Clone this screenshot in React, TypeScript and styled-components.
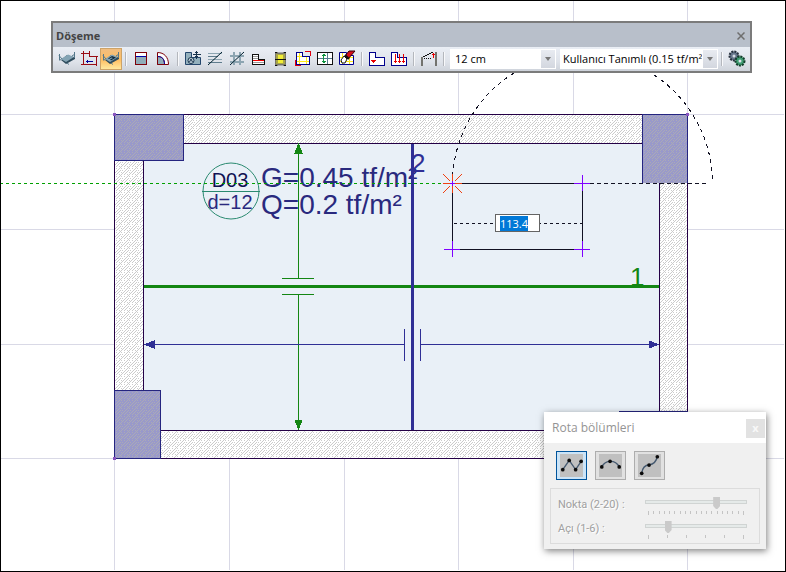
import React, { useEffect, useRef } from 'react';
import styled, { createGlobalStyle, css } from 'styled-components';

const GlobalStyle = createGlobalStyle`
  *, *::before, *::after { box-sizing: border-box; }
  body { margin: 0; background: #fff; font-family: "Open Sans", "Noto Sans", sans-serif; font-size: 12px; color: #000; }
  button, input, select { font: inherit; color: inherit; margin: 0; }
`;

const Workspace = styled.main`
  position: relative;
  min-height: 100vh;
  border: 1px solid #000;
  overflow: hidden;
  display: grid;
`;

const Plan = styled.svg`
  display: block;
  width: 100%;
  height: 100%;
  margin: -1px 0 0 -1px;
  font-family: "Liberation Sans", Arial, sans-serif;
`;

const LengthInput = styled.input`
  position: absolute;
  left: 494px;
  top: 213px;
  width: 45px;
  height: 18px;
  padding: 0 0 0 4px;
  border: 1px solid #646464;
  background: #fff;
  font-size: 11px;
  line-height: 14px;
  outline: none;
  &::selection { background: #0078d7; color: #fff; }
`;

/* ---------- toolbar ---------- */

const Toolbar = styled.section`
  position: absolute;
  left: 50px;
  top: 20px;
  border: 2px solid #7b7b7b;
  background: #b8bfca;
`;

const ToolbarHeader = styled.header`
  display: flex;
  align-items: center;
  justify-content: space-between;
  height: 24px;
  padding: 2px 5px 0 3px;
`;

const ToolbarTitle = styled.h1`
  margin: 0;
  font-size: 11px;
  line-height: 16px;
  font-weight: 700;
  color: #444;
`;

const ToolbarClose = styled.button`
  display: flex;
  padding: 0;
  border: 0;
  background: none;
  color: #6e6e6e;
`;

const ToolRow = styled.div`
  display: flex;
  align-items: center;
  height: 24px;
  padding: 0 2px 0 3px;
  background: linear-gradient(#eaeef5, #dfe3ea 60%, #ced3db);
`;

const ToolButton = styled.button<{ $active?: boolean }>`
  display: flex;
  align-items: center;
  justify-content: center;
  width: 22px;
  height: 22px;
  padding: 0;
  border: 1px solid transparent;
  background: none;
  ${(p) =>
    p.$active &&
    css`
      border-color: #cda368;
      background: linear-gradient(#f0bd80, #ffbf63 55%, #ffe9a0);
    `}
`;

const Divider = styled.span`
  width: 8px;
  height: 14px;
  border-left: 2px solid transparent;
  background: linear-gradient(90deg, transparent 1px, #b4b7bd 1px, #b4b7bd 2px, #f8f9fb 2px, #f8f9fb 3px, transparent 3px);
`;

const Combo = styled.div<{ $width: number }>`
  display: flex;
  position: relative;
  width: ${(p) => p.$width}px;
  height: 20px;
  margin-left: ${(p) => (p.$width > 120 ? 4 : 2)}px;
  background: #fff;
  overflow: hidden;
`;

const ComboSelect = styled.select<{ $inset: number }>`
  appearance: none;
  width: calc(100% - 16px);
  border: 0;
  padding: 0 0 0 ${(p) => p.$inset}px;
  background: transparent;
  font-size: 11px;
  line-height: 20px;
  text-overflow: clip;
  outline: none;
`;

const ComboArrow = styled.span`
  display: flex;
  align-items: center;
  justify-content: center;
  width: 14px;
  height: 18px;
  margin: 1px;
  background: linear-gradient(#e8ebf1, #d3d7df);
  pointer-events: none;
`;

/* ---------- route panel ---------- */

const Panel = styled.section`
  position: absolute;
  left: 543px;
  top: 411px;
  width: 222px;
  background: #f0f0f0;
  box-shadow: 1px 2px 7px rgba(0, 0, 0, 0.5);
`;

const PanelHeader = styled.header`
  display: flex;
  align-items: center;
  justify-content: space-between;
  height: 31px;
  padding: 2px 1px 0 8px;
  background: #fff;
`;

const PanelTitle = styled.h2`
  margin: 0;
  padding-bottom: 2px;
  font-size: 12px;
  line-height: 16px;
  font-weight: 400;
  color: #949494;
`;

const PanelClose = styled.button`
  width: 19px;
  height: 19px;
  padding: 0 0 2px;
  border: 0;
  background: #e2e2e2;
  color: #f8f8f8;
  font-size: 11px;
  line-height: 16px;
  font-weight: 700;
`;

const PanelBody = styled.div`
  padding: 8px 6px 5px;
`;

const RouteTypes = styled.div`
  display: flex;
  gap: 8px;
  padding-left: 6px;
`;

const RouteButton = styled.button<{ $selected?: boolean }>`
  width: 31px;
  height: 29px;
  padding: 2px 3px;
  border: 1px solid ${(p) => (p.$selected ? '#00549c' : '#adadad')};
  background: ${(p) => (p.$selected ? '#cce4f7' : '#e1e1e1')};
  display: flex;
  align-items: center;
  justify-content: center;
`;

const Settings = styled.div`
  display: grid;
  gap: 2px;
  margin-top: 8px;
  padding: 6px 12px 2px 7px;
  border: 1px solid #dcdcdc;
`;

const Setting = styled.div`
  display: flex;
  justify-content: space-between;
  height: 22px;
`;

const SettingLabel = styled.label`
  font-family: Roboto, sans-serif;
  font-size: 11px;
  line-height: 20px;
  color: #a0a0a0;
  text-shadow: 1px 1px 0 #fff;
`;

const SliderBox = styled.div`
  width: 102px;
`;

const Slider = styled.input`
  appearance: none;
  display: block;
  width: 100%;
  height: 14px;
  background: transparent;
  &::-webkit-slider-runnable-track {
    height: 4px;
    border: 1px solid #d0d4d3;
    background: #e5eae9;
  }
  &::-webkit-slider-thumb {
    appearance: none;
    width: 7px;
    height: 12px;
    margin-top: -4px;
    background: #cacaca;
    clip-path: polygon(0 0, 100% 0, 100% 75%, 60% 100%, 40% 100%, 0 75%);
  }
`;

const Ticks = styled.svg`
  display: block;
  width: 102px;
  height: 6px;
`;

/* ---------- icons ---------- */

const L_SHAPE = 'M1.5 2.5H7.5V7.5H16.5V15.5H1.5Z';

const Icon = ({ children, smooth }: { children: React.ReactNode; smooth?: boolean }) => (
  <svg width="18" height="18" viewBox="0 0 18 18" fill="none" shapeRendering={smooth ? 'auto' : 'crispEdges'} aria-hidden="true">
    {children}
  </svg>
);

const SlabIcon = ({ hole }: { hole?: boolean }) => (
  <Icon smooth>
    <path d="M3 10L8 14L17 9V7.5L9 5Z" fill="#2e4b5c" />
    <path d="M3 9L10 4.5L16 7L8 12Z" fill="#84a4b4" />
    {hole && <path d="M6 8.5L10 6L14 7.5L9 10.5L8 9.5L11 8L9.500 7.500L7 9Z" fill="#102c3e" />}
    <path d="M1.500 4V10.500M16.500 2V8M1 5.500L4 9M17 4L14 6M3 10L1 9M9 13L11 14.500" stroke="#54788b" />
  </Icon>
);

const OutlineIcon = () => (
  <Icon>
    <path d="M1 3.5H9.5V6.5H16.5V15.5M3.5 1V14.5H17M1 14.5H4M14 6.5H18M9.5 1V5" stroke="#990c14" />
    <path d="M6 11.5H13M7.5 10V13" stroke="#00009a" />
  </Icon>
);

const SquareSlabIcon = () => (
  <Icon>
    <rect x="3.5" y="2.5" width="11" height="12" fill="#8facb8" stroke="#7c0008" />
    <path d="M4 3H14V6H4Z" fill="#fff" />
    <path d="M4 6.5H14" stroke="#0000a8" />
  </Icon>
);

const ArcSlabIcon = () => (
  <Icon smooth>
    <path d="M3.5 2.5C10 2.5 14.5 7 14.5 14.5H3.5Z" fill="#fff" stroke="#7c0008" />
    <path d="M3.5 6.5C8 6.5 10.5 9 10.5 14.5H3.5Z" fill="#8facb8" stroke="#7c0008" />
    <path d="M4 6.5C8 6.5 10.5 9 10.5 14" stroke="#0000a8" />
  </Icon>
);

const AutoSlabIcon = () => (
  <Icon smooth>
    <path d="M1.5 2.5H7.5V7.5H16.5V14.5H1.5Z" fill="#93b0bd" stroke="#24466c" />
    <circle cx="7" cy="10.5" r="3" fill="#c2d3dc" stroke="#18324c" />
    <path d="M5.5 12L7 9L8.5 12" stroke="#18324c" />
    <path d="M12.5 1V9M9 4.5H17M11 2.5H14M11 6.500H14" stroke="#18324c" />
  </Icon>
);

const LinesIcon = () => (
  <Icon>
    <path d="M2 3.5H16M2 9.5H16" stroke="#8da5b2" />
    <path d="M2 6.5H12M2 12.5H16" stroke="#5f7c8d" />
    <path d="M2 15L16 2" stroke="#00202f" shapeRendering="auto" />
  </Icon>
);

const HashIcon = () => (
  <Icon>
    <path d="M6 2V15M12 2V15M2 6H16M2 12H16" stroke="#8da5b2" strokeWidth="2" />
    <path d="M2 15L16 2" stroke="#00202f" shapeRendering="auto" />
  </Icon>
);

const SectionIcon = () => (
  <Icon>
    <path d="M2.5 4.5H8.5V9.5H14.5V14.5H2.5Z" fill="#fff" stroke="#111" />
    <path d="M3 6.5H8M3 8.5H8M3 12.5H14" stroke="#999" />
    <path d="M3 10.5H14" stroke="#f00000" />
  </Icon>
);

const StripIcon = () => (
  <Icon>
    <rect x="3" y="2" width="11" height="14" fill="#77776a" />
    <rect x="4" y="4" width="9" height="10" fill="#a9a548" />
    <rect x="6" y="5" width="5" height="8" fill="#f1ee36" />
    <path d="M3 9.5H14M3 2.5H5M12 2.5H14M3 15.5H5M12 15.5H14" stroke="#111" />
    <path d="M6 2.5H11M6 15.5H11" stroke="#aaa" />
  </Icon>
);

const RegionIcon = () => (
  <Icon>
    <path d="M2.5 2.5H8.5V6.5H15.5V14.5H2.5Z" fill="#fff" stroke="#00008c" />
    <path d="M5.5 3V14M12.5 7V14M3 6.5H8M3 11.5H15" stroke="#ffeb1c" />
    <path d="M11 1.5H16.5V6M1.5 10V15.5H7" stroke="#e00010" />
  </Icon>
);

const SpanIcon = () => (
  <Icon>
    <rect x="1.5" y="2.5" width="15" height="12" fill="#fff" stroke="#111" />
    <path d="M2 8.5H16M11.5 3V14" stroke="#567b8d" />
    <path d="M7.5 4V13M5.5 5.5H9.5M6.5 4.5H8.5M5.5 11.5H9.5M6.5 12.5H8.5" stroke="#109440" />
  </Icon>
);

const EraseIcon = () => (
  <Icon smooth>
    <path d="M1.5 2.5H8.5V5.5H15.5V14.5H1.5Z" fill="#fff" stroke="#00008c" />
    <path d="M4.5 3V14M11.5 6V14M2 7.5H15M2 11.5H15" stroke="#ffeb1c" />
    <path d="M7 6L11 1H17L10 9Z" fill="#d80c18" stroke="#330006" />
    <path d="M7 5L11 9" stroke="#111" strokeWidth="2" />
    <path d="M3 10L6 6L9 9L7 13H4Z" fill="#fff" stroke="#111" />
  </Icon>
);

const LoadIcon = () => (
  <Icon>
    <path d={L_SHAPE} fill="#fff" stroke="#00008c" />
    <path d="M3 10H8V11H7V12H6V13H5V12H4V11H3Z" fill="#e80000" />
  </Icon>
);

const LoadsIcon = () => (
  <Icon>
    <path d={L_SHAPE} fill="#fff" stroke="#00008c" />
    <path d="M5.5 4V13M9.5 4V13M13.5 4V13M4 11.5H7M8 11.5H11M12 11.5H15" stroke="#e80000" />
  </Icon>
);

const SlopeIcon = () => (
  <Icon>
    <path d="M2 7V16M16 2V16" stroke="#73736e" strokeWidth="2" />
    <path d="M3 7L13 2" stroke="#111" />
    <path d="M4 8.5H12" stroke="#111" strokeDasharray="1 1" />
    <path d="M13.5 3V8M12 4.5H15" stroke="#e80000" />
  </Icon>
);

const GearsIcon = () => (
  <Icon smooth>
    <circle cx="6" cy="6" r="4.5" fill="#66758b" stroke="#27303d" strokeWidth="2" strokeDasharray="2 1" />
    <circle cx="6" cy="6" r="1.5" fill="#d5dae3" />
    <circle cx="12" cy="11" r="4.5" fill="#3f9d72" stroke="#123d2a" strokeWidth="2" strokeDasharray="2 1" />
    <circle cx="12" cy="11" r="1.5" fill="#e0e4ec" />
  </Icon>
);

type Tool = { label: string; icon: React.ReactNode; active?: boolean };

const toolGroups: Tool[][] = [
  [
    { label: 'Döşeme', icon: <SlabIcon /> },
    { label: 'Döşeme sınırı', icon: <OutlineIcon /> },
    { label: 'Döşeme boşluğu', icon: <SlabIcon hole />, active: true },
  ],
  [
    { label: 'Düz kenar', icon: <SquareSlabIcon /> },
    { label: 'Eğri kenar', icon: <ArcSlabIcon /> },
  ],
  [
    { label: 'Otomatik döşeme', icon: <AutoSlabIcon /> },
    { label: 'Tek yön', icon: <LinesIcon /> },
    { label: 'Çift yön', icon: <HashIcon /> },
    { label: 'Kesit', icon: <SectionIcon /> },
    { label: 'Şerit', icon: <StripIcon /> },
    { label: 'Bölge', icon: <RegionIcon /> },
    { label: 'Açıklık', icon: <SpanIcon /> },
    { label: 'Sil', icon: <EraseIcon /> },
  ],
  [
    { label: 'Yük', icon: <LoadIcon /> },
    { label: 'Yükler', icon: <LoadsIcon /> },
  ],
  [{ label: 'Eğim', icon: <SlopeIcon /> }],
];

const DropArrow = () => (
  <ComboArrow>
    <svg width="6" height="4" viewBox="0 0 6 4" aria-hidden="true">
      <path d="M0 0H6L3 4Z" fill="#777" />
    </svg>
  </ComboArrow>
);

const SlabToolbar = () => (
  <Toolbar aria-label="Döşeme">
    <ToolbarHeader>
      <ToolbarTitle>Döşeme</ToolbarTitle>
      <ToolbarClose aria-label="Kapat">
        <svg width="8" height="8" viewBox="0 0 8 8" aria-hidden="true">
          <path d="M0.5 0.5L7.5 7.5M7.5 0.5L0.5 7.5" stroke="currentColor" strokeWidth="1.5" />
        </svg>
      </ToolbarClose>
    </ToolbarHeader>
    <ToolRow>
      {toolGroups.map((group, i) => (
        <React.Fragment key={i}>
          {group.map((tool) => (
            <ToolButton key={tool.label} $active={tool.active} aria-label={tool.label}>
              {tool.icon}
            </ToolButton>
          ))}
          <Divider />
        </React.Fragment>
      ))}
      <Combo $width={106}>
        <ComboSelect $inset={5} aria-label="Kalınlık">
          <option>12 cm</option>
        </ComboSelect>
        <DropArrow />
      </Combo>
      <Combo $width={158}>
        <ComboSelect $inset={3} aria-label="Hareketli yük">
          <option>Kullanıcı Tanımlı (0.15 tf/m²)</option>
        </ComboSelect>
        <DropArrow />
      </Combo>
      <Divider />
      <ToolButton aria-label="Ayarlar">
        <GearsIcon />
      </ToolButton>
    </ToolRow>
  </Toolbar>
);

/* ---------- plan drawing ---------- */

const GRID_X = [114, 229, 344, 458, 573, 687];
const GRID_Y = [114, 229, 344, 458];

const HATCH_DOTS: number[][] = [
  [7, 0], [6, 1], [5, 2], [4, 3], [3, 4], [2, 5], [1, 6], [0, 7],
  [1, 0], [4, 0], [2, 2], [0, 2], [7, 3], [1, 4], [6, 4], [4, 6], [7, 6], [5, 5],
];
const HATCH = HATCH_DOTS.map(([x, y]) => `M${x} ${y}h1v1h-1z`).join('');

const NodeMark = ({ x, y }: { x: number; y: number }) => (
  <path d={`M${x - 8} ${y}.5H${x + 8}M${x}.5 ${y - 8}V${y + 8}`} stroke="#7f00ff" />
);

const FloorPlan = () => (
  <Plan shapeRendering="crispEdges" role="img" aria-label="Döşeme planı">
    <defs>
      <pattern id="wallHatch" width="8" height="8" patternUnits="userSpaceOnUse">
        <rect width="8" height="8" fill="#fff" />
        <path d={HATCH} fill="#cbcbcb" />
      </pattern>
      <pattern id="columnHatch" width="8" height="8" patternUnits="userSpaceOnUse">
        <rect width="8" height="8" fill="#9999ca" />
        <path d={HATCH} fill="#aaaab6" />
      </pattern>
    </defs>

    {GRID_X.map((x) => (
      <line key={x} x1={x + 0.5} x2={x + 0.5} y1="0" y2="100%" stroke="#d9d9e6" />
    ))}
    {GRID_Y.map((y) => (
      <line key={y} x1="0" x2="100%" y1={y + 0.5} y2={y + 0.5} stroke="#d9d9e6" />
    ))}

    <rect x="114.5" y="114.5" width="573" height="344" fill="url(#wallHatch)" stroke="#240046" />
    <rect x="143.5" y="143.5" width="516" height="287" fill="#e9f0f7" stroke="#240046" />

    <g fill="url(#columnHatch)" stroke="#25257f">
      <rect x="114.5" y="114.5" width="69" height="46" />
      <rect x="114.5" y="390.5" width="46" height="68" />
      <rect x="619.5" y="411.5" width="68" height="46" />
      <path d="M642.5 183V114.5H687.5V183" />
    </g>
    <g fill="#8a55c0">
      <rect x="113" y="113" width="3" height="3" />
      <rect x="686" y="113" width="3" height="3" />
      <rect x="113" y="457" width="3" height="3" />
    </g>

    <g fill="#29297e" fontSize="28">
      <text x="261" y="187">G=0.45 tf/m²</text>
      <text x="261" y="214">Q=0.2 tf/m²</text>
    </g>
    <g fontSize="20" textAnchor="middle">
      <text x="230" y="187" fill="#101052">D03</text>
      <text x="230" y="209" fill="#29297e">d=12</text>
    </g>
    <circle cx="231" cy="191" r="28" fill="none" stroke="#2a8a70" shapeRendering="auto" />
    <path d="M202 191.5H260" stroke="#2a8a70" />

    <g stroke="#138613" fill="#138613">
      <path d="M298.5 144V278.5M282 278.5H314M282 294.5H314M298.5 294V430" />
      <path d="M144 286.5H659" strokeWidth="3" />
      <path d="M298.5 144L302 153H295ZM298.5 429L302 420H295Z" />
    </g>
    <g stroke="#2f2f95" fill="#2f2f95">
      <path d="M144 344.5H404.5M404.5 329V361M420.5 329V361M420 344.5H659" />
      <path d="M412.5 144V430" strokeWidth="3" />
      <path d="M145 344.5L154 341V348ZM658 344.5L649 341V348Z" />
    </g>
    <text x="411" y="172" fontSize="26" fill="#2f2f95">2</text>
    <text x="630" y="286" fontSize="26" fill="#138613">1</text>

    <path d="M0 183.5H452" stroke="#00a000" strokeDasharray="3 3" />
    <g fill="none" stroke="#111122">
      <path d="M583 183.5H706" strokeDasharray="4 3" />
      <path d="M452.5 183.5A130 130 0 0 1 712.5 183.5" strokeDasharray="4 4" />
      <rect x="452.5" y="183.5" width="130" height="66" />
      <path d="M454 223.5H582" strokeDasharray="3 3" />
    </g>
    <path d="M443 183.5H462M452.5 174V193M443 174L450 181M462 174L455 181M443 193L450 186M462 193L455 186" stroke="#f04010" />
    <path d="M450 183.5H455M452.5 181V186" stroke="#7f00ff" />
    <NodeMark x={582} y={183} />
    <NodeMark x={582} y={249} />
    <NodeMark x={452} y={249} />
  </Plan>
);

/* ---------- route panel content ---------- */

const RouteIcon = ({ path, dots }: { path: string; dots: number[][] }) => (
  <svg width="25" height="25" viewBox="0 0 25 25" aria-hidden="true">
    <rect width="25" height="25" fill="#c0c0c0" />
    <path d={path} fill="none" stroke="#465a70" strokeWidth="1.5" />
    {dots.map(([x, y]) => (
      <circle key={`${x}-${y}`} cx={x} cy={y} r="2" fill="#0b0b0b" />
    ))}
  </svg>
);

const routes = [
  { label: 'Doğrusal', path: 'M3 17L10 7L17 17L23 8', dots: [[3, 17], [10, 7], [17, 17], [23, 8]] },
  { label: 'Yay', path: 'M3 14C7 6 18 6 22 14', dots: [[3, 14], [12, 8], [22, 14]] },
  { label: 'Eğri', path: 'M4 21C5 14 9 12 12 12C17 11 20 8 21 3', dots: [[4, 21], [12, 12], [21, 3]] },
];

const settings = [
  { id: 'nokta', label: 'Nokta (2-20) :', min: 2, max: 20, value: 15 },
  { id: 'aci', label: 'Açı (1-6) :', min: 1, max: 6, value: 2 },
];

const RoutePanel = () => (
  <Panel aria-label="Rota bölümleri">
    <PanelHeader>
      <PanelTitle>Rota bölümleri</PanelTitle>
      <PanelClose aria-label="Kapat">x</PanelClose>
    </PanelHeader>
    <PanelBody>
      <RouteTypes>
        {routes.map((r, i) => (
          <RouteButton key={r.label} $selected={i === 0} aria-label={r.label}>
            <RouteIcon path={r.path} dots={r.dots} />
          </RouteButton>
        ))}
      </RouteTypes>
      <Settings>
        {settings.map((s) => (
          <Setting key={s.id}>
            <SettingLabel htmlFor={s.id}>{s.label}</SettingLabel>
            <SliderBox>
              <Slider id={s.id} type="range" min={s.min} max={s.max} defaultValue={s.value} disabled />
              <Ticks shapeRendering="crispEdges" aria-hidden="true">
                {Array.from({ length: s.max - s.min + 1 }, (_, i) => {
                  const x = 3 + Math.round((i * 95) / (s.max - s.min));
                  const end = i === 0 || i === s.max - s.min;
                  return <rect key={i} x={x} y="2" width="1" height={end ? 4 : 3} fill="#c4c4c4" />;
                })}
              </Ticks>
            </SliderBox>
          </Setting>
        ))}
      </Settings>
    </PanelBody>
  </Panel>
);

export default function App() {
  const lengthRef = useRef<HTMLInputElement>(null);

  useEffect(() => {
    lengthRef.current?.focus({ preventScroll: true });
    lengthRef.current?.select();
  }, []);

  return (
    <>
      <GlobalStyle />
      <Workspace>
        <FloorPlan />
        <LengthInput ref={lengthRef} defaultValue="113.4" aria-label="Uzunluk" />
        <SlabToolbar />
        <RoutePanel />
      </Workspace>
    </>
  );
}
